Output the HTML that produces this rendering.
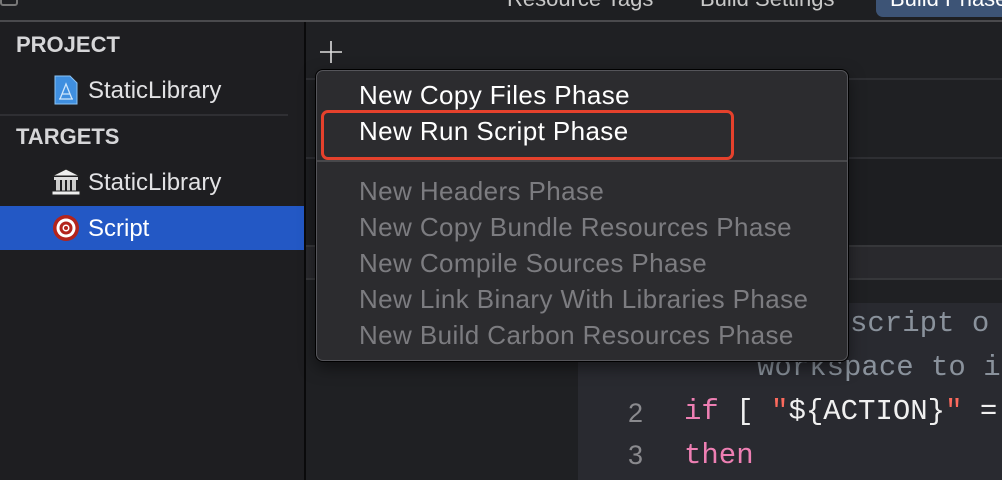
<!DOCTYPE html>
<html><head><style>
*{margin:0;padding:0;box-sizing:border-box}
body{width:1002px;height:480px;overflow:hidden;background:#1f2023;font-family:"Liberation Sans",sans-serif;position:relative}
.abs{position:absolute}
.t{position:absolute;white-space:nowrap}
.mi{position:absolute;left:42px;font-size:26px;white-space:nowrap;line-height:28px;letter-spacing:0.4px}
.code{font-family:"Liberation Mono",monospace;font-size:29px;position:absolute;white-space:nowrap;line-height:32px;font-weight:500}
</style></head><body>
<div class="abs" style="left:0;top:0;width:1002px;height:21px;background:#1e1f22"></div>
<div class="t" style="left:507px;top:-14px;font-size:22px;color:#c8c8c8">Resource Tags</div>
<div class="t" style="left:700px;top:-14px;font-size:22px;color:#c8c8c8">Build Settings</div>
<div class="abs" style="left:876px;top:-8px;width:140px;height:25px;background:#3d5476;border-radius:7px"></div>
<div class="t" style="left:890px;top:-14px;font-size:22px;color:#fff">Build Phases</div>
<div class="abs" style="left:0;top:-6px;width:18px;height:12px;border:2px solid #777;border-radius:3px"></div>
<div class="abs" style="left:0;top:20px;width:1002px;height:2px;background:#4a4a4d"></div>
<div class="abs" style="left:0;top:22px;width:304px;height:458px;background:#1e1e21"></div>
<div class="abs" style="left:304px;top:22px;width:2px;height:458px;background:#0a0a0b"></div>
<div class="t" style="left:16px;top:32px;font-size:22px;font-weight:bold;color:#d6d6d8">PROJECT</div>
<svg class="abs" style="left:54px;top:75px" width="24" height="30" viewBox="0 0 24 30"><path d="M1 1h15l7 7v21H1z" fill="#3f8fe0" stroke="#8cc4f5"/><path d="M6 24l6-15 6 15M8 19h8M5 24h14" stroke="#cfe6fb" stroke-width="1.3" fill="none"/></svg>
<div class="t" style="left:88px;top:77px;font-size:24px;color:#e2e2e4">StaticLibrary</div>
<div class="abs" style="left:0;top:114px;width:288px;height:2px;background:#2f2f33"></div>
<div class="t" style="left:16px;top:124px;font-size:22px;font-weight:bold;color:#d6d6d8">TARGETS</div>
<svg class="abs" style="left:50px;top:167px" width="32" height="30" viewBox="0 0 32 30"><path d="M2 9L16 2l14 7z" fill="#eee" stroke="#222"/><rect x="4" y="10" width="24" height="3" fill="#ddd"/><rect x="6" y="13" width="4" height="11" fill="#ccc"/><rect x="12" y="13" width="3" height="11" fill="#ccc"/><rect x="17" y="13" width="3" height="11" fill="#ccc"/><rect x="22" y="13" width="4" height="11" fill="#ccc"/><rect x="2" y="24" width="28" height="4" fill="#eee" stroke="#222"/></svg>
<div class="t" style="left:88px;top:169px;font-size:24px;color:#e2e2e4">StaticLibrary</div>
<div class="abs" style="left:0;top:206px;width:304px;height:44px;background:#2358c5"></div>
<svg class="abs" style="left:52px;top:214px" width="28" height="28" viewBox="0 0 28 28"><circle cx="14" cy="14" r="13" fill="#b3241c"/><circle cx="14" cy="14" r="9.5" fill="#fff"/><circle cx="14" cy="14" r="6.5" fill="#b3241c"/><circle cx="14" cy="14" r="3.5" fill="#fff"/><circle cx="14" cy="14" r="2" fill="#b3241c"/></svg>
<div class="t" style="left:88px;top:215px;font-size:24px;color:#fff">Script</div>
<svg class="abs" style="left:319px;top:40px" width="24" height="24"><path d="M12 1v22M1 12h22" stroke="#ddd" stroke-width="1.6"/></svg>
<div class="abs" style="left:306px;top:78px;width:696px;height:2px;background:#2e2f33"></div>
<div class="abs" style="left:306px;top:157px;width:696px;height:88px;background:#1d1e21;border-top:2px solid #2e2f33"></div>
<div class="abs" style="left:306px;top:245px;width:696px;height:35px;background:#29292d;border-top:2px solid #36373a;border-bottom:2px solid #36373a"></div>
<div class="abs" style="left:578px;top:303px;width:424px;height:177px;background:#292a30"></div>
<div class="code" style="left:850px;top:308px;color:#8a929c">script o</div>
<div class="code" style="left:757px;top:352px;color:#8a929c">workspace to i</div>
<div class="t" style="left:628px;top:398px;font-size:27px;color:#8a8a8e">2</div>
<div class="t" style="left:628px;top:440px;font-size:27px;color:#8a8a8e">3</div>
<div class="code" style="left:684px;top:396px;color:#f0f0f0"><span style="color:#ee7fb3">if</span> [ <span style="color:#fc6a5d">"</span>${ACTION}<span style="color:#fc6a5d">"</span> =</div>
<div class="code" style="left:684px;top:440px;color:#ee7fb3">then</div>
<div class="abs" style="left:316px;top:70px;width:532px;height:291px;background:#2c2c2f;border:1px solid #55555a;border-radius:7px;box-shadow:0 0 0 1px #000,0 6px 16px rgba(0,0,0,.5)">
<div class="mi" style="top:10px;color:#fff">New Copy Files Phase</div>
<div class="mi" style="top:46px;color:#fff">New Run Script Phase</div>
<div class="abs" style="left:0;top:89px;width:530px;height:2px;background:#48484b"></div>
<div class="mi" style="top:106px;color:#7c7c80">New Headers Phase</div>
<div class="mi" style="top:142px;color:#7c7c80">New Copy Bundle Resources Phase</div>
<div class="mi" style="top:178px;color:#7c7c80">New Compile Sources Phase</div>
<div class="mi" style="top:214px;color:#7c7c80">New Link Binary With Libraries Phase</div>
<div class="mi" style="top:250px;color:#7c7c80">New Build Carbon Resources Phase</div>
</div>
<div class="abs" style="left:321px;top:110px;width:413px;height:50px;border:3.5px solid #e5412c;border-radius:7px"></div>
</body></html>
